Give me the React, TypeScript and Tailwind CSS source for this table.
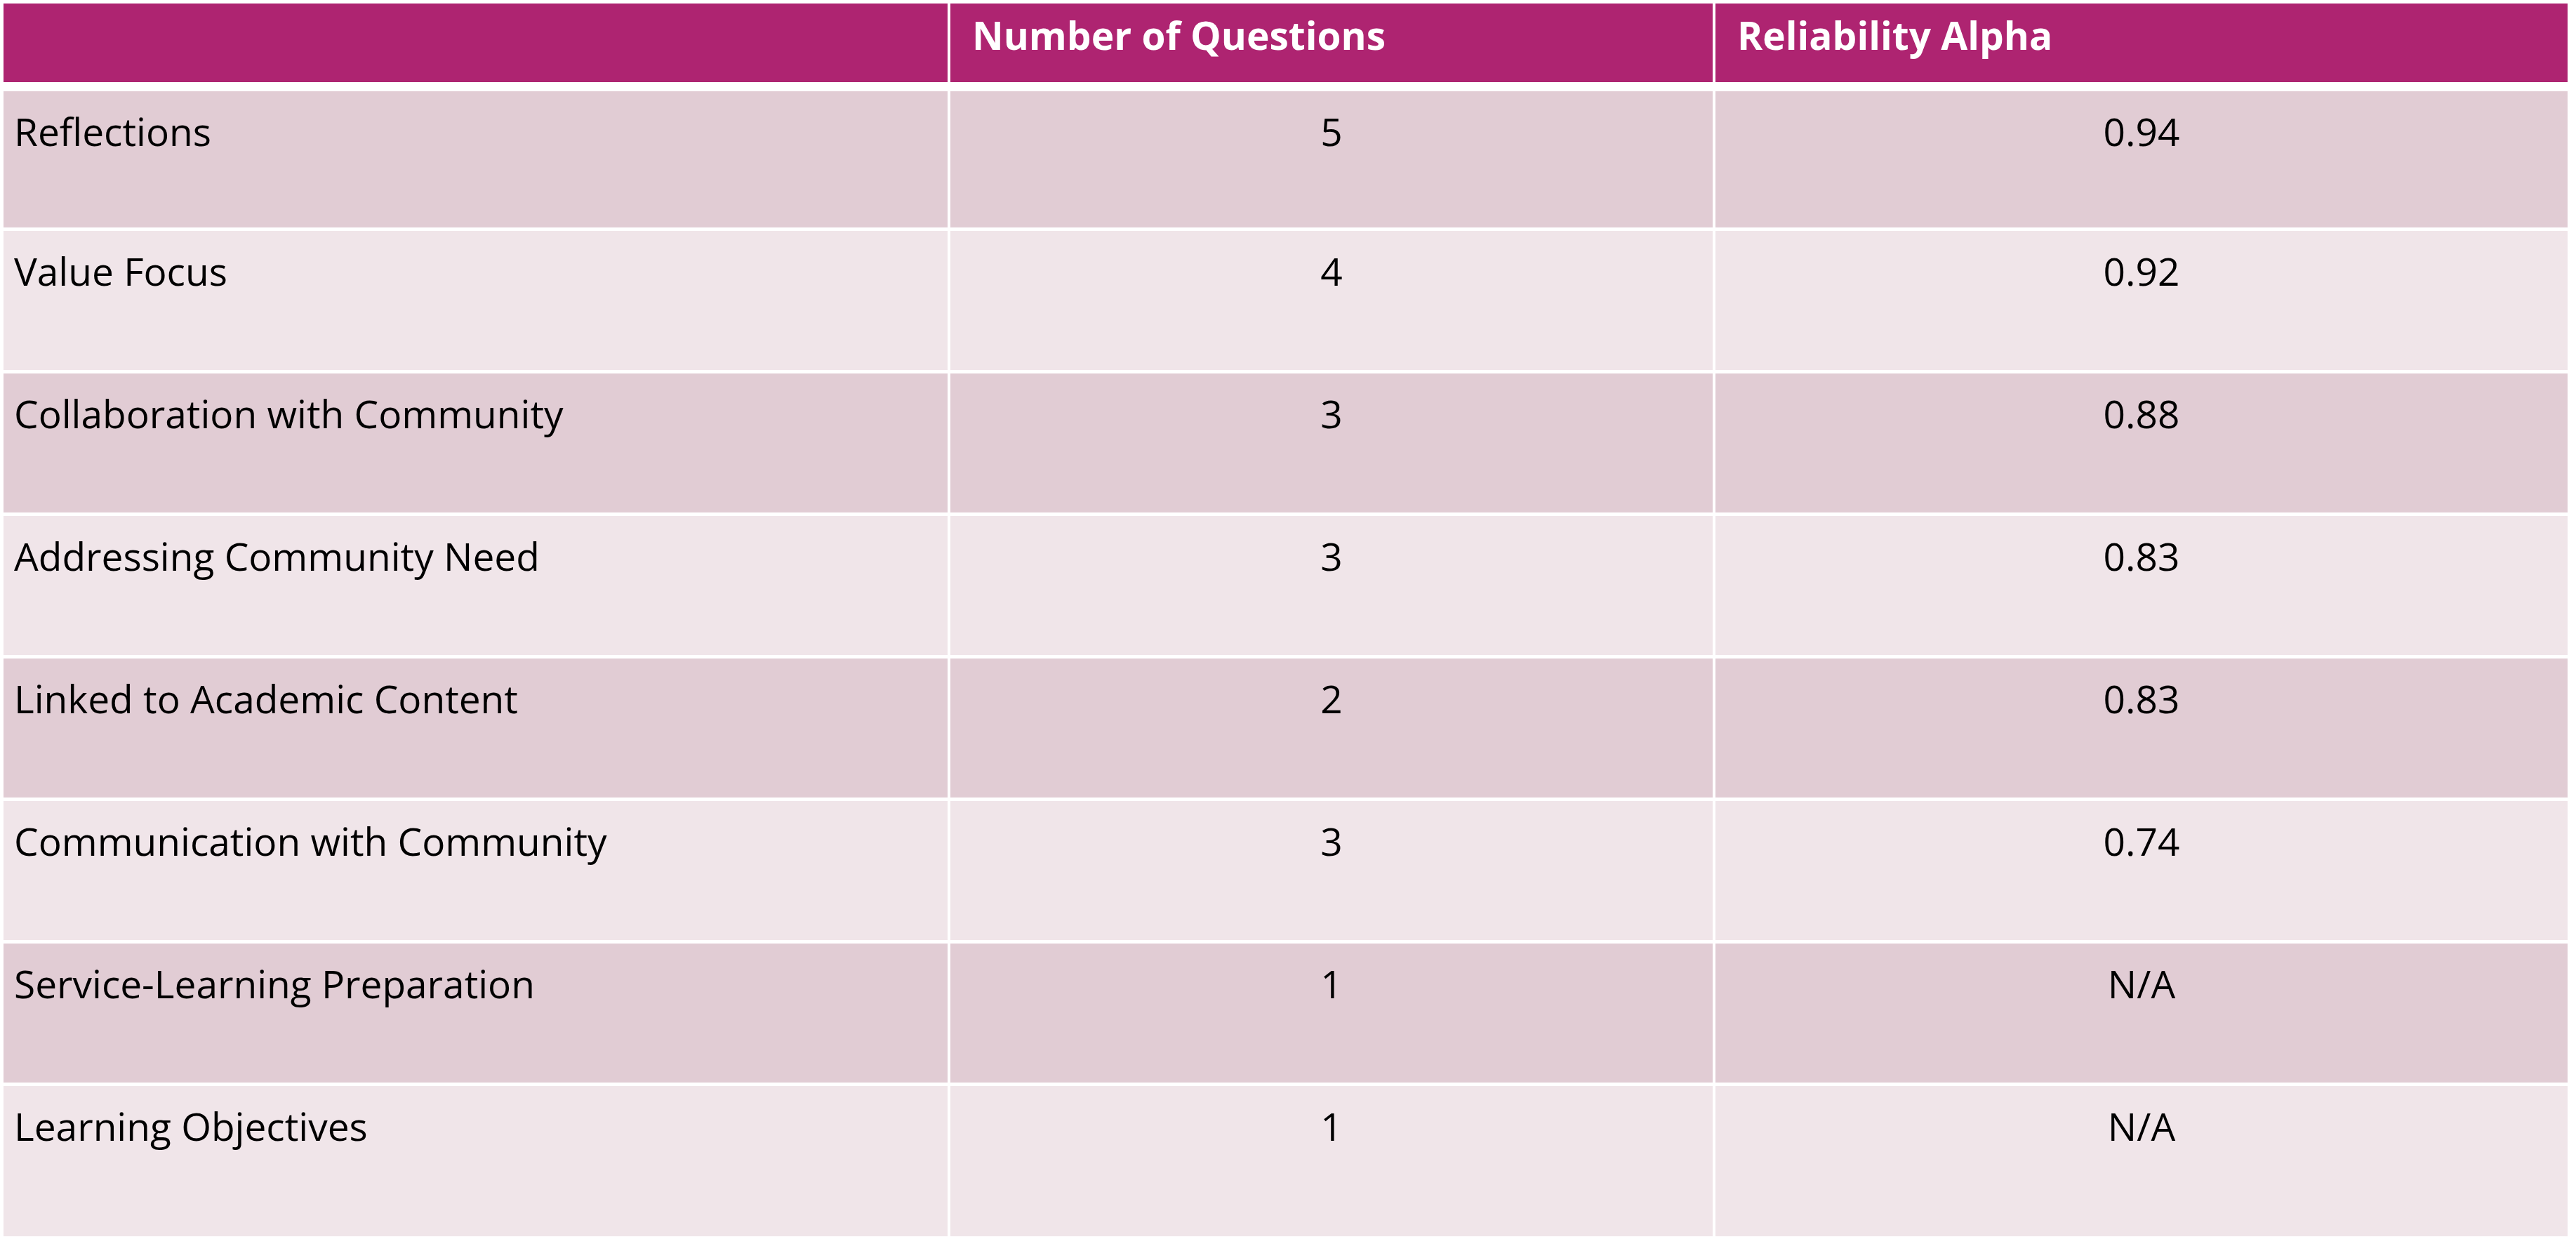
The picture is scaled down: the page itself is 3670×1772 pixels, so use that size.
import React from "react";

type Row = { name: string; count: string; alpha: string };

const rows: Row[] = [
  { name: "Reflections", count: "5", alpha: "0.94" },
  { name: "Value Focus", count: "4", alpha: "0.92" },
  { name: "Collaboration with Community", count: "3", alpha: "0.88" },
  { name: "Addressing Community Need", count: "3", alpha: "0.83" },
  { name: "Linked to Academic Content", count: "2", alpha: "0.83" },
  { name: "Communication with Community", count: "3", alpha: "0.74" },
  { name: "Service-Learning Preparation", count: "1", alpha: "N/A" },
  { name: "Learning Objectives", count: "1", alpha: "N/A" },
];

const rowHeights = ["h-[194px]", "h-[198px]", "h-[198px]", "h-[198px]", "h-[198px]", "h-[198px]", "h-[198px]", "h-[214px]"];

const App = () => {
  return (
    <div className="w-[3670px] h-[1772px] bg-white pl-[5px] pt-[5px] font-['Open_Sans',sans-serif]">
      <div className="grid grid-cols-[1345px_1086px_1214px] gap-x-[4px] h-[112px] text-white font-bold text-[55px] leading-[74px]">
        <div className="bg-[#ae2471]" />
        <div className="bg-[#ae2471] pl-[31px] pt-[8px]">Number of Questions</div>
        <div className="bg-[#ae2471] pl-[31px] pt-[8px]">Reliability Alpha</div>
      </div>
      <div className="mt-[13px] flex flex-col gap-y-[5px] text-black text-[55px] leading-[74px]">
        {rows.map((r, i) => {
          const bg = i % 2 === 0 ? "bg-[#e1ccd4]" : "bg-[#f0e5e9]";
          return (
            <div key={r.name} className={`grid grid-cols-[1345px_1086px_1214px] gap-x-[4px] ${rowHeights[i]}`}>
              <div className={`${bg} pl-[15px] pt-[20px]`}>{r.name}</div>
              <div className={`${bg} pt-[20px] text-center`}>{r.count}</div>
              <div className={`${bg} pt-[20px] text-center`}>{r.alpha}</div>
            </div>
          );
        })}
      </div>
    </div>
  );
};

export default App;
